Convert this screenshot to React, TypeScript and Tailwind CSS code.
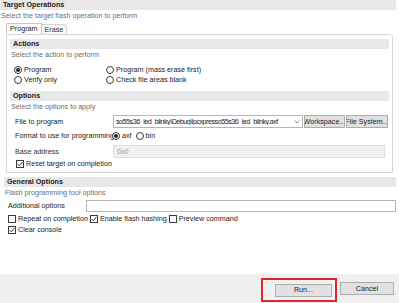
import React from 'react';

const Radio = ({ checked = false }: { checked?: boolean }) => (
  <span className="w-[8px] h-[8px] rounded-full border border-[#3a3a3a] bg-white flex items-center justify-center shrink-0">
    {checked && <span className="w-[4px] h-[4px] rounded-full bg-[#222]" />}
  </span>
);

const Check = ({ checked = false }: { checked?: boolean }) => (
  <span className="w-[8px] h-[8px] border border-[#3a3a3a] bg-white flex items-center justify-center shrink-0">
    {checked && (
      <svg width="6" height="6" viewBox="0 0 6 6">
        <path d="M0.6 3.1 L2.3 4.8 L5.4 1" fill="none" stroke="#222" strokeWidth="0.9" />
      </svg>
    )}
  </span>
);

const Band = ({ title }: { title: string }) => (
  <div className="h-[10px] bg-[#e8e8e8] flex items-center pl-[3px] font-bold text-[#222]">{title}</div>
);

const Btn = ({ label, className = '' }: { label: string; className?: string }) => (
  <div className={'h-[13px] bg-[#e1e1e1] border border-[#adadad] flex items-center justify-center text-[#222] whitespace-nowrap overflow-hidden ' + className}>
    {label}
  </div>
);

const App = () => {
  return (
    <div className="w-[399px] h-[303px] bg-white flex flex-col text-[7.2px] leading-none text-[#222] font-['Liberation_Sans',Arial,sans-serif] overflow-hidden">
      <div className="flex flex-col flex-1 pr-[3px]">
        {/* Target operations */}
        <Band title="Target Operations" />
        <div className="h-[11px] flex items-center pl-[1px] text-[#6d6d6d]">Select the target flash operation to perform</div>

        <div className="flex items-end h-[12px] pl-[6px] mt-[1px]">
          <div className="h-[11px] px-[3px] flex items-center border border-b-0 border-[#c8c8c8] bg-white rounded-tl-[2px]">Program</div>
          <div className="h-[10px] px-[3px] flex items-center border-t border-r border-[#d6d6d6] bg-[#f7f7f7] rounded-tr-[3px] text-[#333]">Erase</div>
          <div className="flex-1" />
        </div>

        <div className="ml-[6px] mr-[3px] border border-[#d6d6d6] rounded-tr-[3px] px-[3px] pt-[4px] pb-[3px] flex flex-col">
          <Band title="Actions" />
          <div className="h-[11px] flex items-center text-[#6d6d6d] pl-[1px]">Select the action to perform</div>
          <div className="grid grid-cols-[92px_1fr] pl-[4px] mt-[5px]">
            <div className="h-[10px] flex items-center gap-[2px]"><Radio checked />Program</div>
            <div className="h-[10px] flex items-center gap-[2px]"><Radio />Program (mass erase first)</div>
            <div className="h-[10px] flex items-center gap-[2px]"><Radio />Verify only</div>
            <div className="h-[10px] flex items-center gap-[2px]"><Radio />Check file areas blank</div>
          </div>

          <div className="mt-[6px]"><Band title="Options" /></div>
          <div className="h-[11px] flex items-center text-[#6d6d6d] pl-[1px]">Select the options to apply</div>

          <div className="flex items-center mt-[3px] pl-[5px]">
            <div className="w-[98px]">File to program</div>
            <div className="w-[190px] h-[13px] border border-[#b5b5b5] flex items-center pl-[2px] pr-[2px] overflow-hidden">
              <span className="flex-1 whitespace-nowrap overflow-hidden tracking-[-0.5px]">so55s36_led_blinky\Debug\lpcxpresso55s36_led_blinky.axf</span>
              <svg width="6" height="4" viewBox="0 0 6 4" className="ml-[3px] shrink-0">
                <path d="M0.5 0.5 L3 3 L5.5 0.5" fill="none" stroke="#777" strokeWidth="0.8" />
              </svg>
            </div>
            <Btn label="Workspace..." className="w-[41px] ml-[1px]" />
            <Btn label="File System..." className="w-[42px] ml-[1px]" />
          </div>

          <div className="flex items-center h-[12px] mt-[2px] pl-[5px]">
            <span className="w-[97px] whitespace-nowrap">Format to use for programming</span>
            <span className="flex items-center gap-[2px]"><Radio checked />axf</span>
            <span className="flex items-center gap-[2px] ml-[4px]"><Radio />bin</span>
          </div>

          <div className="flex items-center mt-[3px] pl-[5px]">
            <div className="w-[98px] text-[#333]">Base address</div>
            <div className="flex-1 h-[13px] bg-[#f0f0f0] border border-[#dedede] flex items-center pl-[3px] text-[#9a9a9a]">0x0</div>
            <div className="w-[4px]" />
          </div>

          <div className="flex items-center gap-[2px] h-[10px] pl-[6px] mt-[1px]"><Check checked />Reset target on completion</div>
        </div>

        {/* General options */}
        <div className="mt-[4px] pl-[4px]"><Band title="General Options" /></div>
        <div className="h-[11px] flex items-center text-[#6d6d6d] pl-[5px]">Flash programming tool options</div>
        <div className="flex items-center pl-[8px] mt-[2px]">
          <div className="w-[78px]">Additional options</div>
          <div className="flex-1 h-[12px] border border-[#b5b5b5]" />
        </div>
        <div className="flex items-center h-[11px] pl-[8px] mt-[1px]">
          <span className="flex items-center gap-[2px]"><Check />Repeat on completion</span>
          <span className="flex items-center gap-[2px] ml-[2px]"><Check checked />Enable flash hashing</span>
          <span className="flex items-center gap-[2px] ml-[2px]"><Check />Preview command</span>
        </div>
        <div className="flex items-center gap-[2px] h-[12px] pl-[8px]"><Check checked />Clear console</div>
      </div>

      {/* Footer */}
      <div className="h-[29px] bg-[#f0f0f0] flex items-center justify-end pr-[5px]">
        <div className="h-[24px] w-[76px] border-2 border-[#e0262a] flex items-center justify-end pr-[3px] mt-[3px]">
          <Btn label="Run..." className="w-[57px] border-[#0078d7]" />
        </div>
        <Btn label="Cancel" className="w-[54px] ml-[3px]" />
      </div>
    </div>
  );
};

export default App;
